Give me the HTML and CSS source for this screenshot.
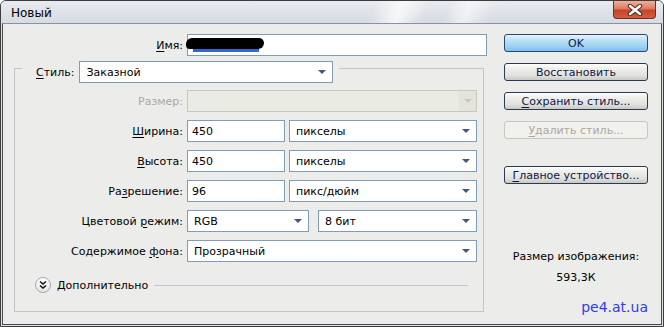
FILE: index.html
```html
<!DOCTYPE html>
<html lang="ru">
<head>
    <meta charset="UTF-8">
    <meta name="viewport" content="width=device-width, initial-scale=1.0">
    <title>Новый</title>
    <link rel="stylesheet" href="styles.css">
</head>
<body>
<div class="window">
    <div class="titlebar">
        <span class="title">Новый</span>
        <button class="close" title="Закрыть">
            <svg width="16" height="12" viewBox="0 0 16 12">
                <path d="M3 2 L13 10 M13 2 L3 10" stroke="#5a2a22" stroke-width="4.5" stroke-linecap="round"/>
                <path d="M3 2 L13 10 M13 2 L3 10" stroke="#ffffff" stroke-width="2.4" stroke-linecap="round"/>
            </svg>
        </button>
    </div>

    <div class="client">
        <div class="form">
            <div class="name-row">
                <label class="lbl lbl-name"><u>И</u>мя:</label>
                <div class="field name-field">
                    <span class="sel"><span class="blot"></span></span>
                </div>
            </div>

            <fieldset class="group">
                <legend>
                    <div class="legend-row">
                        <label class="lbl"><u>С</u>тиль:</label>
                        <div class="select style-select">Заказной<span class="arrow"></span></div>
                    </div>
                </legend>

                <div class="frow">
                    <label class="lbl lbl-row disabled">Размер:</label>
                    <div class="select wide disabled"><span class="arrow-box"><span class="arrow"></span></span></div>
                </div>
                <div class="frow">
                    <label class="lbl lbl-row"><u>Ш</u>ирина:</label>
                    <div class="field num">450</div>
                    <div class="select unit">пикселы<span class="arrow"></span></div>
                </div>
                <div class="frow">
                    <label class="lbl lbl-row"><u>В</u>ысота:</label>
                    <div class="field num">450</div>
                    <div class="select unit">пикселы<span class="arrow"></span></div>
                </div>
                <div class="frow">
                    <label class="lbl lbl-row">Ра<u>з</u>решение:</label>
                    <div class="field num">96</div>
                    <div class="select unit">пикс/дюйм<span class="arrow"></span></div>
                </div>
                <div class="frow">
                    <label class="lbl lbl-row">Цветовой <u>р</u>ежим:</label>
                    <div class="select mode">RGB<span class="arrow"></span></div>
                    <div class="select bits">8 бит<span class="arrow"></span></div>
                </div>
                <div class="frow last">
                    <label class="lbl lbl-row">Содержимое <u>ф</u>она:</label>
                    <div class="select wide">Прозрачный<span class="arrow"></span></div>
                </div>

                <div class="more">
                    <span class="more-btn">
                        <svg width="10" height="10" viewBox="0 0 10 10">
                            <path d="M2 1.5 L5 4 L8 1.5 M2 5.5 L5 8 L8 5.5" fill="none" stroke="#111" stroke-width="1.5"/>
                        </svg>
                    </span>
                    <span class="more-text">Дополнительно</span>
                    <span class="more-line"></span>
                </div>
            </fieldset>
        </div>

        <div class="side">
            <button class="btn default">OK</button>
            <button class="btn">Восстановить</button>
            <button class="btn"><u>С</u>охранить стиль...</button>
            <button class="btn" disabled><u>У</u>далить стиль...</button>
            <button class="btn device"><u>Г</u>лавное устройство...</button>

            <div class="size-label">Размер изображения:</div>
            <div class="size-value">593,3К</div>
            <div class="site">pe4.at.ua</div>
        </div>
    </div>
</div>
</body>
</html>
```

FILE: styles.css
```css
/* Photoshop "Новый" dialog, XP/Vista basic look */
body {
    margin: 0;
    font-family: "DejaVu Sans", sans-serif;
    font-size: 11px;
    color: #000;
    background: #fff;
}
u {
    text-decoration: underline;
    text-underline-offset: 2px;
}

.window {
    width: 664px;
    height: 327px;
    box-sizing: border-box;
    border: 1px solid #3d3d3d;
    border-radius: 6px 6px 0 0;
    background: #dfe3e9;
    display: flex;
    flex-direction: column;
    overflow: hidden;
}

.titlebar {
    height: 22px;
    flex: none;
    display: flex;
    align-items: flex-start;
    background:
        linear-gradient(110deg, rgba(255,255,255,0) 56%, rgba(255,255,255,.75) 60%, rgba(255,255,255,0) 64%,
            rgba(255,255,255,0) 67%, rgba(255,255,255,.55) 70%, rgba(255,255,255,0) 74%),
        linear-gradient(#e8ebef, #d6dbe2);
}
.title {
    font-size: 12px;
    line-height: 24px;
    padding-left: 10px;
}
.close {
    margin-left: auto;
    margin-right: 7px;
    width: 43px;
    height: 18px;
    padding: 0;
    border: 1px solid #7a2a1c;
    border-top: 0;
    border-radius: 0 0 4px 4px;
    background: linear-gradient(#eeb19b, #dc7b60 45%, #c4452a 55%, #d1603f);
    display: flex;
    align-items: center;
    justify-content: center;
}

.client {
    flex: 1;
    margin: 0 1px 1px;
    border: 1px solid #4a4a4a;
    border-top-color: #8493ab;
    background: #ecedeb;
    display: flex;
}

.form {
    width: 487px;
    padding-top: 10px;
}

.lbl {
    white-space: nowrap;
}
.lbl.disabled {
    color: #aaa99f;
}

.name-row {
    display: flex;
    align-items: center;
    height: 22px;
}
.lbl-name {
    width: 180px;
    margin-right: 4px;
    text-align: right;
}

.field,
.select {
    box-sizing: border-box;
    flex: none;
    height: 22px;
    border: 1px solid #7f9db9;
    background: #fff;
    display: flex;
    align-items: center;
    white-space: nowrap;
}
.field {
    padding-left: 4px;
}
.select {
    padding-left: 6px;
}
.name-field {
    width: 300px;
    padding-left: 5px;
}
.sel {
    position: relative;
    display: inline-block;
    width: 66px;
    height: 14px;
    background: #2f69d6;
}
.blot {
    position: absolute;
    left: -7px;
    top: 0;
    width: 78px;
    height: 11px;
    border-radius: 6px 5px 6px 4px;
    background: #000;
}

.arrow {
    margin-left: auto;
    margin-right: 6px;
    width: 0;
    height: 0;
    border-left: 4px solid transparent;
    border-right: 4px solid transparent;
    border-top: 4px solid #44577d;
}

/* legend gets extra top padding so the frame line runs a bit above the select's middle */
.group {
    margin: -3px 0 0 11px;
    width: 470px;
    box-sizing: border-box;
    padding: 7px 6px 18px 7px;
    border: 1px solid #c2c5ca;
    min-width: 0;
}
.group legend {
    padding: 8px 6px 0 14px;
}
.legend-row {
    display: flex;
    align-items: center;
}
.legend-row .lbl {
    margin-right: 5px;
}
.style-select {
    width: 254px;
}

.frow {
    display: flex;
    align-items: center;
    height: 22px;
    margin-bottom: 8px;
}
.frow.last {
    margin-bottom: 0;
}
.lbl-row {
    flex: none;
    width: 161px;
    margin-right: 4px;
    text-align: right;
}
.num {
    width: 98px;
    margin-right: 4px;
}
.unit {
    width: 188px;
}
.wide {
    width: 290px;
}
.mode {
    width: 122px;
    margin-right: 9px;
}
.bits {
    width: 159px;
}

.select.disabled {
    border-color: #cac8bb;
    background: #ebebe6;
    padding-left: 0;
}
.arrow-box {
    margin-left: auto;
    width: 17px;
    height: 20px;
    background: #e4e4dd;
    display: flex;
    align-items: center;
    justify-content: center;
}
.arrow-box .arrow {
    margin: 0;
    border-top-color: #c8c7bd;
}

.more {
    display: flex;
    align-items: center;
    height: 16px;
    margin-top: 15px;
    padding-left: 13px;
}
.more-btn {
    box-sizing: border-box;
    width: 16px;
    height: 16px;
    border: 1px solid #a5a7aa;
    border-radius: 50%;
    background: linear-gradient(#ffffff, #e3e4e6);
    display: flex;
    align-items: center;
    justify-content: center;
}
.more-text {
    margin-left: 6px;
}
.more-line {
    flex: 1;
    height: 1px;
    margin: 0 9px 0 6px;
    background: #c2c5ca;
}

.side {
    width: 144px;
    margin-left: 14px;
    padding-top: 10px;
    display: flex;
    flex-direction: column;
}
.btn {
    height: 18px;
    margin-bottom: 11px;
    padding: 0;
    font-family: "DejaVu Sans", sans-serif;
    font-size: 11px;
    color: #10174a;
    border: 1px solid #2c3a52;
    border-radius: 3px;
    background: linear-gradient(#ffffff, #efefec 25%, #e2e2de 70%, #c9c9c4);
}
.btn.default {
    border-color: #29467a;
    background: linear-gradient(#e6f4fc, #b9e0f6 35%, #9fd3f2 70%, #7dbfe6);
}
.btn:disabled {
    color: #aca899;
    border-color: #c9c7ba;
    background: #f1f1ee;
}
.btn.device {
    margin-top: 16px;
}

.size-label {
    margin-top: 55px;
    text-align: center;
    line-height: 14px;
}
.size-value {
    margin-top: 7px;
    text-align: center;
    line-height: 14px;
}
.site {
    margin-top: 14px;
    text-align: right;
    font-size: 14px;
    line-height: 17px;
    color: #2f3bf2;
}
```
